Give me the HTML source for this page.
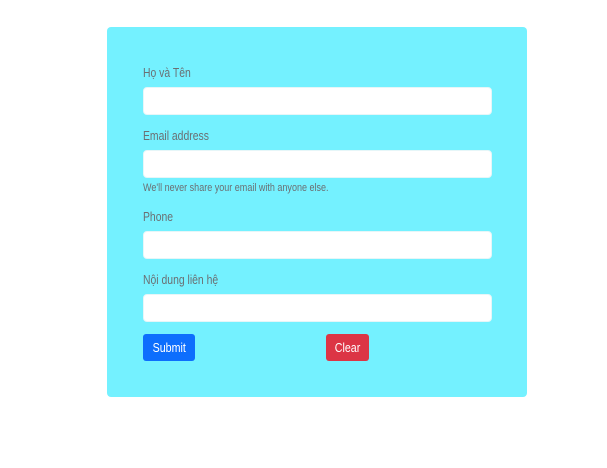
<!DOCTYPE html>
<html><head><meta charset="utf-8"><style>
body{margin:0;width:607px;height:468px;background:#fff;font-family:"Liberation Sans",sans-serif;position:relative;overflow:hidden}
.card{position:absolute;left:107px;top:27px;width:420px;height:370px;background:#74f1ff;border-radius:4px}
.l,.h{position:absolute;left:143px;font-size:13px;color:#6b6f73;line-height:16px;transform:scaleX(0.8);transform-origin:left;white-space:nowrap}
.h{font-size:11px;top:181px;line-height:14px;transform:scaleX(0.82)}
.i{position:absolute;left:143px;width:347px;height:26px;background:#fff;border:1px solid #e6f6f8;border-radius:4px}
.b{position:absolute;top:334px;height:27px;border-radius:3px;color:#fff;font-size:13px;line-height:27px;text-align:center}
.b span{display:inline-block;transform:scaleX(0.82)}
</style></head><body>
<div class="card"></div>
<div class="l" style="top:65px">Họ và Tên</div>
<div class="i" style="top:87px"></div>
<div class="l" style="top:128px">Email address</div>
<div class="i" style="top:150px"></div>
<div class="h">We'll never share your email with anyone else.</div>
<div class="l" style="top:209px">Phone</div>
<div class="i" style="top:231px"></div>
<div class="l" style="top:272px">Nội dung liên hệ</div>
<div class="i" style="top:294px"></div>
<div class="b" style="left:143px;width:52px;background:#0d6efd"><span>Submit</span></div>
<div class="b" style="left:326px;width:43px;background:#dc3545"><span>Clear</span></div>
</body></html>
